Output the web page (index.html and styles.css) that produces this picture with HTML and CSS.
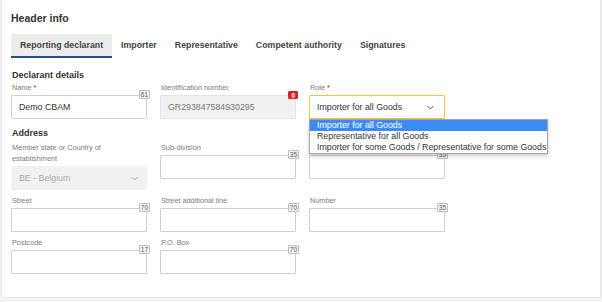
FILE: index.html
```html
<!DOCTYPE html>
<html lang="en">
<head>
    <meta charset="UTF-8">
    <meta name="viewport" content="width=device-width, initial-scale=1.0">
    <title>Header info</title>
    <link rel="stylesheet" href="styles.css">
</head>
<body>
    <div class="card">
        <h2 class="title">Header info</h2>
        <div class="tabs">
            <div class="tab active">Reporting declarant</div>
            <div class="tab">Importer</div>
            <div class="tab">Representative</div>
            <div class="tab">Competent authority</div>
            <div class="tab">Signatures</div>
        </div>

        <h3 class="section">Declarant details</h3>
        <div class="fields">
            <div class="field">
                <label>Name <span class="req">*</span></label>
                <div class="box">
                    <div class="input">Demo CBAM</div>
                    <span class="count">61</span>
                </div>
            </div>
            <div class="field">
                <label>Identification number</label>
                <div class="box">
                    <div class="input readonly">GR293847584930295</div>
                    <span class="count red">0</span>
                </div>
            </div>
            <div class="field">
                <label>Role <span class="req">*</span></label>
                <div class="box">
                    <div class="input select focus">
                        Importer for all Goods
                        <svg width="7" height="5" viewBox="0 0 7 5"><polyline points="0.5,1 3.5,4 6.5,1" fill="none" stroke="#555" stroke-width="1"/></svg>
                    </div>
                    <ul class="options">
                        <li class="selected">Importer for all Goods</li>
                        <li>Representative for all Goods</li>
                        <li>Importer for some Goods / Representative for some Goods</li>
                    </ul>
                </div>
            </div>
        </div>

        <h3 class="section address">Address</h3>
        <div class="fields grid-top">
            <div class="field">
                <label>Member state or Country of establishment</label>
                <div class="box">
                    <div class="input select disabled">
                        BE - Belgium
                        <svg width="7" height="5" viewBox="0 0 7 5"><polyline points="0.5,1 3.5,4 6.5,1" fill="none" stroke="#aaa" stroke-width="1"/></svg>
                    </div>
                </div>
            </div>
            <div class="field">
                <label>Sub-division</label>
                <div class="box">
                    <div class="input"></div>
                    <span class="count">35</span>
                </div>
            </div>
            <div class="field">
                <label>&nbsp;</label>
                <div class="box">
                    <div class="input"></div>
                    <span class="count">35</span>
                </div>
            </div>

            <div class="field">
                <label>Street</label>
                <div class="box">
                    <div class="input"></div>
                    <span class="count">70</span>
                </div>
            </div>
            <div class="field">
                <label>Street additional line</label>
                <div class="box">
                    <div class="input"></div>
                    <span class="count">70</span>
                </div>
            </div>
            <div class="field">
                <label>Number</label>
                <div class="box">
                    <div class="input"></div>
                    <span class="count">35</span>
                </div>
            </div>

            <div class="field">
                <label>Postcode</label>
                <div class="box">
                    <div class="input"></div>
                    <span class="count">17</span>
                </div>
            </div>
            <div class="field">
                <label>P.O. Box</label>
                <div class="box">
                    <div class="input"></div>
                    <span class="count">70</span>
                </div>
            </div>
        </div>
    </div>
</body>
</html>
```

FILE: styles.css
```css
*, *::before, *::after{
    box-sizing: border-box;
}
body{
    margin: 0;
    background-color: #f3f3f3;
    font-family: "Liberation Sans", Arial, sans-serif;
    color: #333;
}
.card{
    margin-left: 1px;
    width: 600px;
    height: 298px;
    background-color: white;
    border: 1px solid #e6e6e6;
    border-top: none;
    padding: 11px 9px 0 9px;
}
.title{
    margin: 0;
    font-size: 10.5px;
    line-height: 14px;
    font-weight: bold;
    color: #333;
}

/* tabs */
.tabs{
    display: flex;
    margin-top: 9px;
}
.tab{
    height: 24px;
    line-height: 22px;
    padding: 0 9px;
    font-size: 8.8px;
    font-weight: bold;
    color: #444;
    border-bottom: 2px solid transparent;
}
.tab.active{
    background-color: #ececec;
    border-bottom-color: #1d4f91;
}

.section{
    margin: 11px 0 0 1px;
    font-size: 9px;
    line-height: 13px;
    font-weight: bold;
    color: #333;
}
.section.address{
    margin-top: 8px;
}

/* form grid */
.fields{
    display: grid;
    grid-template-columns: repeat(3, 136px);
    column-gap: 13px;
    row-gap: 5px;
    align-items: start;
}
.fields.grid-top{
    margin-top: 2px;
}
.field label{
    display: block;
    font-size: 7.3px;
    line-height: 11px;
    color: #7a7a7a;
    padding-left: 1px;
}
.req{
    color: #d0021b;
}
.box{
    position: relative;
    margin-top: 2px;
}
.input{
    height: 24px;
    border: 1px solid #cfcfcf;
    border-radius: 1px;
    padding: 0 7px;
    font-size: 8.8px;
    line-height: 22px;
    color: #333;
    background-color: white;
}
.input.readonly{
    background-color: #f1f1f1;
    border-color: #e4e4e4;
    color: #777;
}
.input.select{
    display: flex;
    justify-content: space-between;
    align-items: center;
    padding-right: 10px;
}
.input.focus{
    border-color: #f2c53d;
}
.input.disabled{
    background-color: #f1f1f1;
    border-color: #f1f1f1;
    color: #a9a9a9;
    padding-right: 8px;
}

/* char counters */
.count{
    position: absolute;
    top: -5px;
    right: -3px;
    height: 9px;
    padding: 0 1px;
    font-size: 6.5px;
    line-height: 8px;
    color: #555;
    background-color: #f4f4f4;
    border: 1px solid #bdbdbd;
    border-radius: 1px;
}
.count.red{
    top: -4px;
    right: -2px;
    height: 8px;
    padding: 0 2px;
    color: white;
    background-color: #d71f2d;
    border-color: #d71f2d;
    font-weight: bold;
    line-height: 7px;
}

/* open dropdown */
.options{
    position: absolute;
    top: 100%;
    left: 0;
    width: 239px;
    margin: 0;
    padding: 0;
    list-style: none;
    background-color: white;
    border: 1px solid #a5a5a5;
    box-shadow: 0 2px 4px rgba(0, 0, 0, 0.2);
    z-index: 2;
}
.options li{
    font-size: 8.8px;
    line-height: 11px;
    padding-left: 7px;
    color: #333;
    white-space: nowrap;
}
.options li.selected{
    background-color: #3a8cf2;
    color: white;
}
```
